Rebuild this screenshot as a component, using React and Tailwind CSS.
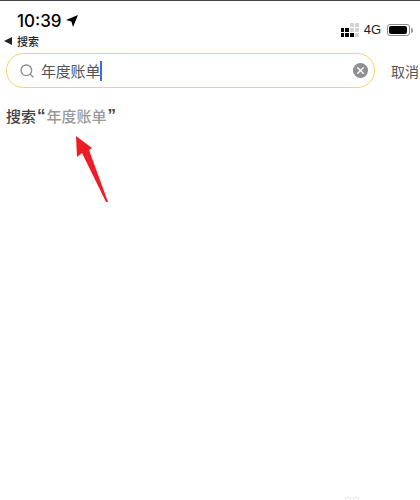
import { Search, X } from "lucide-react";

const cjk = "font-['Noto_Sans_CJK_SC','Liberation_Sans',sans-serif]";
const quote = "font-['Liberation_Sans',sans-serif] text-[17px] leading-[20px] font-bold text-[#444444]";

function Signal() {
  const bars = [
    ["bg-black", "bg-black"],
    ["bg-black", "bg-black"],
    ["bg-[#d4d4d4]", "bg-[#d4d4d4]", "bg-black"],
    ["bg-[#d4d4d4]", "bg-[#d4d4d4]", "bg-[#d4d4d4]"],
  ];
  return (
    <div className="flex items-end gap-px">
      {bars.map((col, i) => (
        <div key={i} className="flex flex-col gap-px">
          {col.map((c, j) => (
            <div key={j} className={`w-[3.75px] h-[4px] ${c}`} />
          ))}
        </div>
      ))}
    </div>
  );
}

function Battery() {
  return (
    <div className="flex items-center">
      <div className="w-[23px] h-[12px] rounded-[3px] border border-[#8a8a8a] p-px">
        <div className="w-[18px] h-full rounded-[2px] bg-black" />
      </div>
      <div className="ml-px w-[2px] h-[5px] rounded-r-sm bg-[#9a9a9a]" />
    </div>
  );
}

export default function App() {
  return (
    <div className={`relative w-[420px] h-[500px] overflow-hidden bg-white ${cjk}`}>
      <div className="h-px bg-[#444444]" />

      {/* status bar */}
      <div className="h-[30px] pl-[17px] pr-[7px] flex items-start justify-between">
        <div className="flex items-center gap-[4px] mt-[9px]">
          <span className="text-[17px] leading-[22px] font-medium text-black font-['Inter',sans-serif]">10:39</span>
          <svg width="12" height="12" viewBox="0 0 12 12">
            <polygon points="12,0 7,12 5.4,6.6 0,5" fill="#000" />
          </svg>
        </div>
        <div className="flex items-center mt-[21px]">
          <Signal />
          <span className="ml-[5px] mr-[6px] text-[13px] leading-[16px] text-[#222222] font-['Liberation_Sans',sans-serif]">4G</span>
          <Battery />
        </div>
      </div>

      {/* back row */}
      <div className="h-[20px] mb-[2px] pl-[4px] flex items-center gap-[5px]">
        <div className="w-0 h-0 border-y-[4px] border-y-transparent border-r-[8px] border-r-[#222222]" />
        <span className="text-[11px] leading-[14px] font-medium text-[#222222]">搜索</span>
      </div>

      {/* search */}
      <div className="flex items-center">
        <div className="ml-[6px] w-[369px] h-[35px] shrink-0 rounded-full border-[1.5px] border-[#f8d26a] flex items-center pl-[12px] pr-[6px]">
          <Search size={16} strokeWidth={2} className="text-[#8c8c8c] shrink-0" />
          <span className="ml-[6px] text-[15px] leading-[20px] tracking-[-0.2px] text-[#555555]">年度账单</span>
          <div className="w-[2px] h-[20px] bg-[#4169e1]" />
          <div className="ml-auto w-[15px] h-[15px] rounded-full bg-[#8e8e93] flex items-center justify-center">
            <X size={11} strokeWidth={3} className="text-white" />
          </div>
        </div>
        <span className="ml-[16px] shrink-0 text-[14px] leading-[20px] text-[#555555]">取消</span>
      </div>

      {/* suggestion */}
      <div className="mt-[18px] pl-[6px] flex items-start text-[15px] leading-[20px] whitespace-nowrap">
        <span className="font-medium text-[#444444]">搜索</span>
        <span className={`ml-px ${quote}`}>“</span>
        <span className="ml-px font-medium text-[#999999]">年度账单</span>
        <span className={`ml-px ${quote}`}>”</span>
      </div>

      {/* red arrow annotation */}
      <svg className="absolute left-0 top-0 pointer-events-none" width="420" height="500" viewBox="0 0 420 500">
        <polygon points="76,136 92,148 89,150 108,202 106,202 82,153 77,157" fill="#ee1c25" />
      </svg>

      {/* faint cut-off mark at the bottom */}
      <svg className="absolute left-[344px] top-[496px]" width="16" height="4" viewBox="0 0 16 4" fill="none">
        <path d="M1 4a3 3 0 0 1 6 0M9 4a3 3 0 0 1 6 0" stroke="#e4e4e4" strokeWidth="1" />
      </svg>
    </div>
  );
}
